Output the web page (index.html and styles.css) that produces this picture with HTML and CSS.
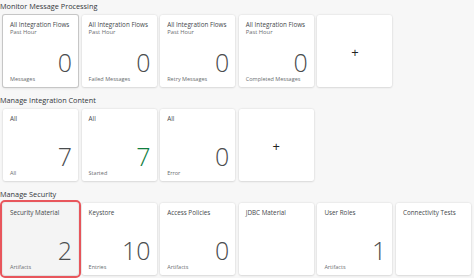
FILE: index.html
```html
<!DOCTYPE html>
<html lang="en">
<head>
    <meta charset="UTF-8">
    <title>Overview</title>
    <link rel="stylesheet" href="styles.css">
</head>
<body>
    <section class="group">
        <h2 class="group-title">Monitor Message Processing</h2>
        <div class="tiles">
            <div class="tile tile-focus">
                <div class="tile-title">All Integration Flows</div>
                <div class="tile-sub">Past Hour</div>
                <div class="tile-value">0</div>
                <div class="tile-foot">Messages</div>
            </div>
            <div class="tile">
                <div class="tile-title">All Integration Flows</div>
                <div class="tile-sub">Past Hour</div>
                <div class="tile-value">0</div>
                <div class="tile-foot">Failed Messages</div>
            </div>
            <div class="tile">
                <div class="tile-title">All Integration Flows</div>
                <div class="tile-sub">Past Hour</div>
                <div class="tile-value">0</div>
                <div class="tile-foot">Retry Messages</div>
            </div>
            <div class="tile">
                <div class="tile-title">All Integration Flows</div>
                <div class="tile-sub">Past Hour</div>
                <div class="tile-value">0</div>
                <div class="tile-foot">Completed Messages</div>
            </div>
            <div class="tile tile-add">+</div>
        </div>
    </section>

    <section class="group">
        <h2 class="group-title">Manage Integration Content</h2>
        <div class="tiles">
            <div class="tile">
                <div class="tile-title">All</div>
                <div class="tile-value">7</div>
                <div class="tile-foot">All</div>
            </div>
            <div class="tile">
                <div class="tile-title">All</div>
                <div class="tile-value good">7</div>
                <div class="tile-foot">Started</div>
            </div>
            <div class="tile">
                <div class="tile-title">All</div>
                <div class="tile-value">0</div>
                <div class="tile-foot">Error</div>
            </div>
            <div class="tile tile-add">+</div>
        </div>
    </section>

    <section class="group">
        <h2 class="group-title">Manage Security</h2>
        <div class="tiles">
            <div class="tile tile-marked">
                <div class="tile-title">Security Material</div>
                <div class="tile-value">2</div>
                <div class="tile-foot">Artifacts</div>
            </div>
            <div class="tile">
                <div class="tile-title">Keystore</div>
                <div class="tile-value">10</div>
                <div class="tile-foot">Entries</div>
            </div>
            <div class="tile">
                <div class="tile-title">Access Policies</div>
                <div class="tile-value">0</div>
                <div class="tile-foot">Artifacts</div>
            </div>
            <div class="tile">
                <div class="tile-title">JDBC Material</div>
            </div>
            <div class="tile">
                <div class="tile-title">User Roles</div>
                <div class="tile-value">1</div>
                <div class="tile-foot">Artifacts</div>
            </div>
            <div class="tile">
                <div class="tile-title">Connectivity Tests</div>
            </div>
        </div>
    </section>
</body>
</html>
```

FILE: styles.css
```css
body {
    margin: 0;
    padding: 0;
    background-color: #f7f7f7;
    font-family: 'Open Sans', 'Liberation Sans', sans-serif;
    color: #32363a;
    overflow: hidden;
}

.group {
    margin-bottom: 7px;
}

.group-title {
    margin: 0 0 3px 0;
    height: 12px;
    line-height: 12px;
    font-size: 7.3px;
    font-weight: normal;
    color: #32363a;
    white-space: nowrap;
}

.tiles {
    display: flex;
    gap: 3.6px;
    padding-left: 3px;
}

.tile {
    width: 75px;
    height: 72px;
    flex: none;
    box-sizing: border-box;
    background-color: #fff;
    border-radius: 2px;
    box-shadow: 0 0 2px rgba(0, 0, 0, 0.15), 0 1px 2px rgba(0, 0, 0, 0.08);
    padding: 6px 7px 4px 7px;
    display: flex;
    flex-direction: column;
}

.tile-focus {
    box-shadow: 0 0 0 1px #c6c6c6, 0 1px 3px rgba(0, 0, 0, 0.15);
}

.tile-marked {
    background-color: #f4f4f4;
    outline: 2px solid #e8565c;
    outline-offset: 1px;
}

.tile-title {
    font-size: 6.3px;
    line-height: 8px;
    color: #45484b;
    white-space: nowrap;
}

.tile-sub {
    font-size: 5.8px;
    line-height: 7px;
    color: #6a6d70;
}

.tile-value {
    margin-top: auto;
    margin-bottom: 4px;
    text-align: right;
    font-size: 25px;
    line-height: 19px;
    font-weight: 300;
    color: #4a4c4e;
    margin-right: -1px;
}

.tile-value.good {
    color: #107e3e;
}

.tile-foot {
    font-size: 5.5px;
    line-height: 7px;
    color: #6a6d70;
    white-space: nowrap;
}

.tile-add {
    align-items: center;
    justify-content: center;
    font-size: 13px;
    color: #222;
}
```
